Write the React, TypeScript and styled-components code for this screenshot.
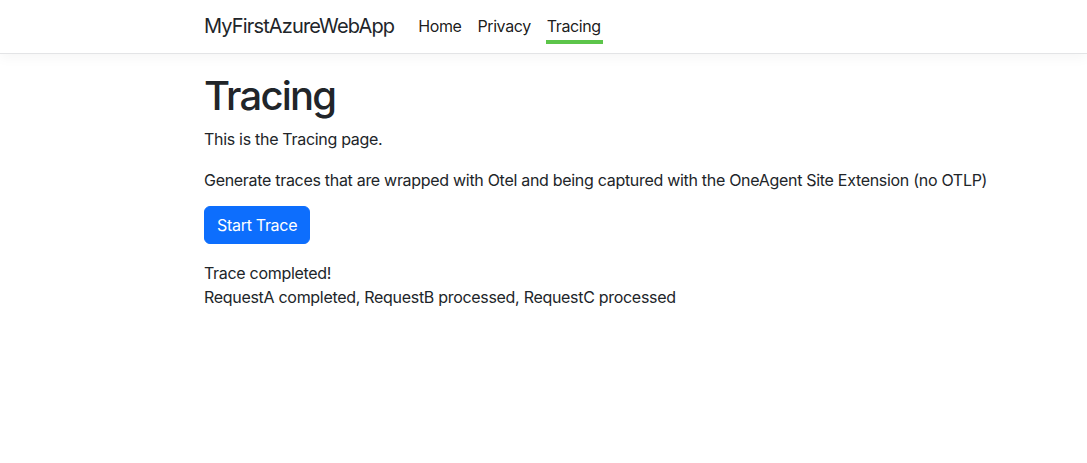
import React from "react";
import styled, { createGlobalStyle } from "styled-components";

const Global = createGlobalStyle`
  html, body { margin: 0; padding: 0; background: #fff; }
  body {
    font-family: Inter, "Noto Sans", "Liberation Sans", sans-serif;
    font-size: 16px;
    line-height: 1.5;
    letter-spacing: -0.3px;
    color: #212529;
  }
`;

const NavBar = styled.header`
  height: 53px;
  border-bottom: 1px solid #e3e4e6;
  box-shadow: 0 4px 12px rgba(0, 0, 0, 0.04);
  display: flex;
  align-items: stretch;
  padding-left: 204px;
`;

const Brand = styled.a`
  font-size: 20px;
  letter-spacing: -0.85px;
  color: #212529;
  text-decoration: none;
  display: flex;
  align-items: center;
  margin-right: 16px;
  padding-bottom: 1px;
`;

const NavList = styled.nav`
  display: flex;
  align-items: stretch;
`;

const NavLink = styled.a<{ $active?: boolean }>`
  position: relative;
  display: flex;
  align-items: center;
  padding: 0 8px;
  padding-bottom: 1px;
  color: rgba(0, 0, 0, 0.9);
  text-decoration: none;
  font-size: 16px;
  letter-spacing: -0.4px;
  &::after {
    content: "";
    display: ${(p) => (p.$active ? "block" : "none")};
    position: absolute;
    left: 7px;
    right: 6px;
    top: 40px;
    height: 4px;
    background: #5cc54a;
  }
`;

const Main = styled.main`
  padding: 18px 0 16px 204px;
`;

const Title = styled.h1`
  font-size: 40px;
  font-weight: 500;
  letter-spacing: -1.8px;
  line-height: 1.2;
  margin: 0 0 7px;
`;

const Para = styled.p<{ $gap?: number }>`
  margin: 0 0 ${(p) => p.$gap ?? 17}px;
`;

const Button = styled.button`
  font-family: inherit;
  font-size: 16px;
  letter-spacing: -0.3px;
  line-height: 1.5;
  color: #fff;
  background: #0d6efd;
  border: 1px solid #0d6efd;
  border-radius: 6px;
  padding: 6px 12px;
  height: 38px;
  cursor: pointer;
  margin: 0 0 17px;
`;

const Result = styled.div`
  line-height: 24px;
`;

export default function App() {
  return (
    <>
      <Global />
      <NavBar>
        <Brand href="#">MyFirstAzureWebApp</Brand>
        <NavList>
          <NavLink href="#">Home</NavLink>
          <NavLink href="#">Privacy</NavLink>
          <NavLink href="#" $active>
            Tracing
          </NavLink>
        </NavList>
      </NavBar>
      <Main>
        <Title>Tracing</Title>
        <Para>This is the Tracing page.</Para>
        <Para $gap={14}>
          Generate traces that are wrapped with Otel and being captured with the
          OneAgent Site Extension (no OTLP)
        </Para>
        <Button>Start Trace</Button>
        <Result>
          Trace completed!
          <br />
          RequestA completed, RequestB processed, RequestC processed
        </Result>
      </Main>
    </>
  );
}
